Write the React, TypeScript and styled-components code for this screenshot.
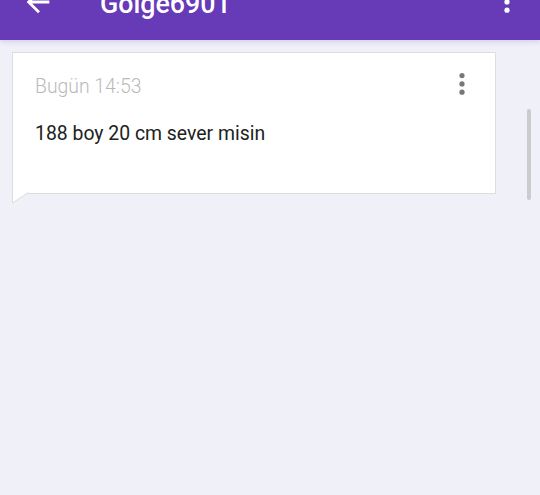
import React from 'react';
import styled, { createGlobalStyle } from 'styled-components';

const GlobalStyle = createGlobalStyle`
  html, body {
    margin: 0;
    padding: 0;
    background: #f0f0f9;
  }
  body {
    font-family: Roboto, 'Noto Sans', 'Liberation Sans', sans-serif;
  }
`;

/* toolbar ------------- */
const BackIcon: React.FC = () => (
  <svg width="34" height="34" viewBox="0 0 24 24" fill="#ffffff">
    <path d="M20 11H7.83l5.59-5.59L12 4l-8 8 8 8 1.41-1.41L7.83 13H20v-2z" />
  </svg>
);

const MoreIcon: React.FC<{ color: string }> = ({ color }) => (
  <svg width="12" height="24" viewBox="0 0 12 24" fill={color}>
    <circle cx="6" cy="3.6" r="2.6" />
    <circle cx="6" cy="11.9" r="2.6" />
    <circle cx="6" cy="20.2" r="2.6" />
  </svg>
);

const Header: React.FC<{ title: string }> = ({ title }) => (
  <HeaderClip>
    <Toolbar>
      <IconSlot>
        <BackIcon />
      </IconSlot>
      <Title>{title}</Title>
      <MenuSlot>
        <MoreIcon color="#ffffff" />
      </MenuSlot>
    </Toolbar>
  </HeaderClip>
);

const HeaderClip = styled.header`
  height: 40px;
  overflow: hidden;
  display: flex;
  flex-direction: column;
  justify-content: flex-end;
  background: #673ab7;
  box-shadow: 0 2px 5px rgba(103, 58, 183, 0.18);
  position: relative;
  z-index: 1;
`;
const Toolbar = styled.div`
  flex: none;
  height: 76px;
  display: flex;
  align-items: center;
  padding-left: 21px;
  padding-right: 27px;
`;
const IconSlot = styled.div`
  display: flex;
  width: 34px;
  height: 34px;
`;
const Title = styled.h1`
  margin: 0 0 0 45px;
  color: #ffffff;
  font-size: 26.8px;
  font-weight: 500;
  line-height: 32px;
  padding-top: 4px;
`;
const MenuSlot = styled.div`
  display: flex;
  margin-left: auto;
`;
/* ------------- */

/* message card ------------- */
interface MessageProps {
  time: string;
  text: string;
}

const MessageCard: React.FC<MessageProps> = ({ time, text }) => (
  <Card>
    <CardHead>
      <Time>{time}</Time>
      <CardMenu>
        <MoreIcon color="#777777" />
      </CardMenu>
    </CardHead>
    <Body>{text}</Body>
    <Tail width="17" height="12" viewBox="0 0 17 12">
      <polygon points="0.5,0 0.5,11 16.5,0" fill="#ffffff" />
      <path d="M0.5 0 V11 L16.5 0.5" fill="none" stroke="#dcdcdc" strokeWidth="1" />
    </Tail>
  </Card>
);

const Card = styled.div`
  position: relative;
  width: 484px;
  box-sizing: border-box;
  background: #ffffff;
  border: 1px solid #dedede;
  padding: 22px 27px 46px 22px;
`;
const CardHead = styled.div`
  display: flex;
  align-items: flex-start;
  justify-content: space-between;
`;
const Time = styled.div`
  font-size: 19.4px;
  font-weight: 300;
  line-height: 24px;
  color: #bababa;
`;
const CardMenu = styled.div`
  display: flex;
  margin-top: -3px;
`;
const Body = styled.p`
  margin: 22px 0 0;
  font-size: 19.4px;
  line-height: 26px;
  color: #212121;
`;
const Tail = styled.svg`
  position: absolute;
  left: -1px;
  top: 100%;
  margin-top: -1px;
  display: block;
`;
/* ------------- */

const Content = styled.main`
  position: relative;
  height: 455px;
  padding: 12px 0 0 12px;
  box-sizing: border-box;
`;
const ScrollThumb = styled.div`
  position: absolute;
  left: 527px;
  top: 69px;
  width: 4px;
  height: 91px;
  border-radius: 2px;
  background: #cbcbcb;
`;

const App: React.FC = () => (
  <>
    <GlobalStyle />
    <Header title="Golge6901" />
    <Content>
      <MessageCard time="Bugün 14:53" text="188 boy 20 cm sever misin" />
      <ScrollThumb />
    </Content>
  </>
);

export default App;
